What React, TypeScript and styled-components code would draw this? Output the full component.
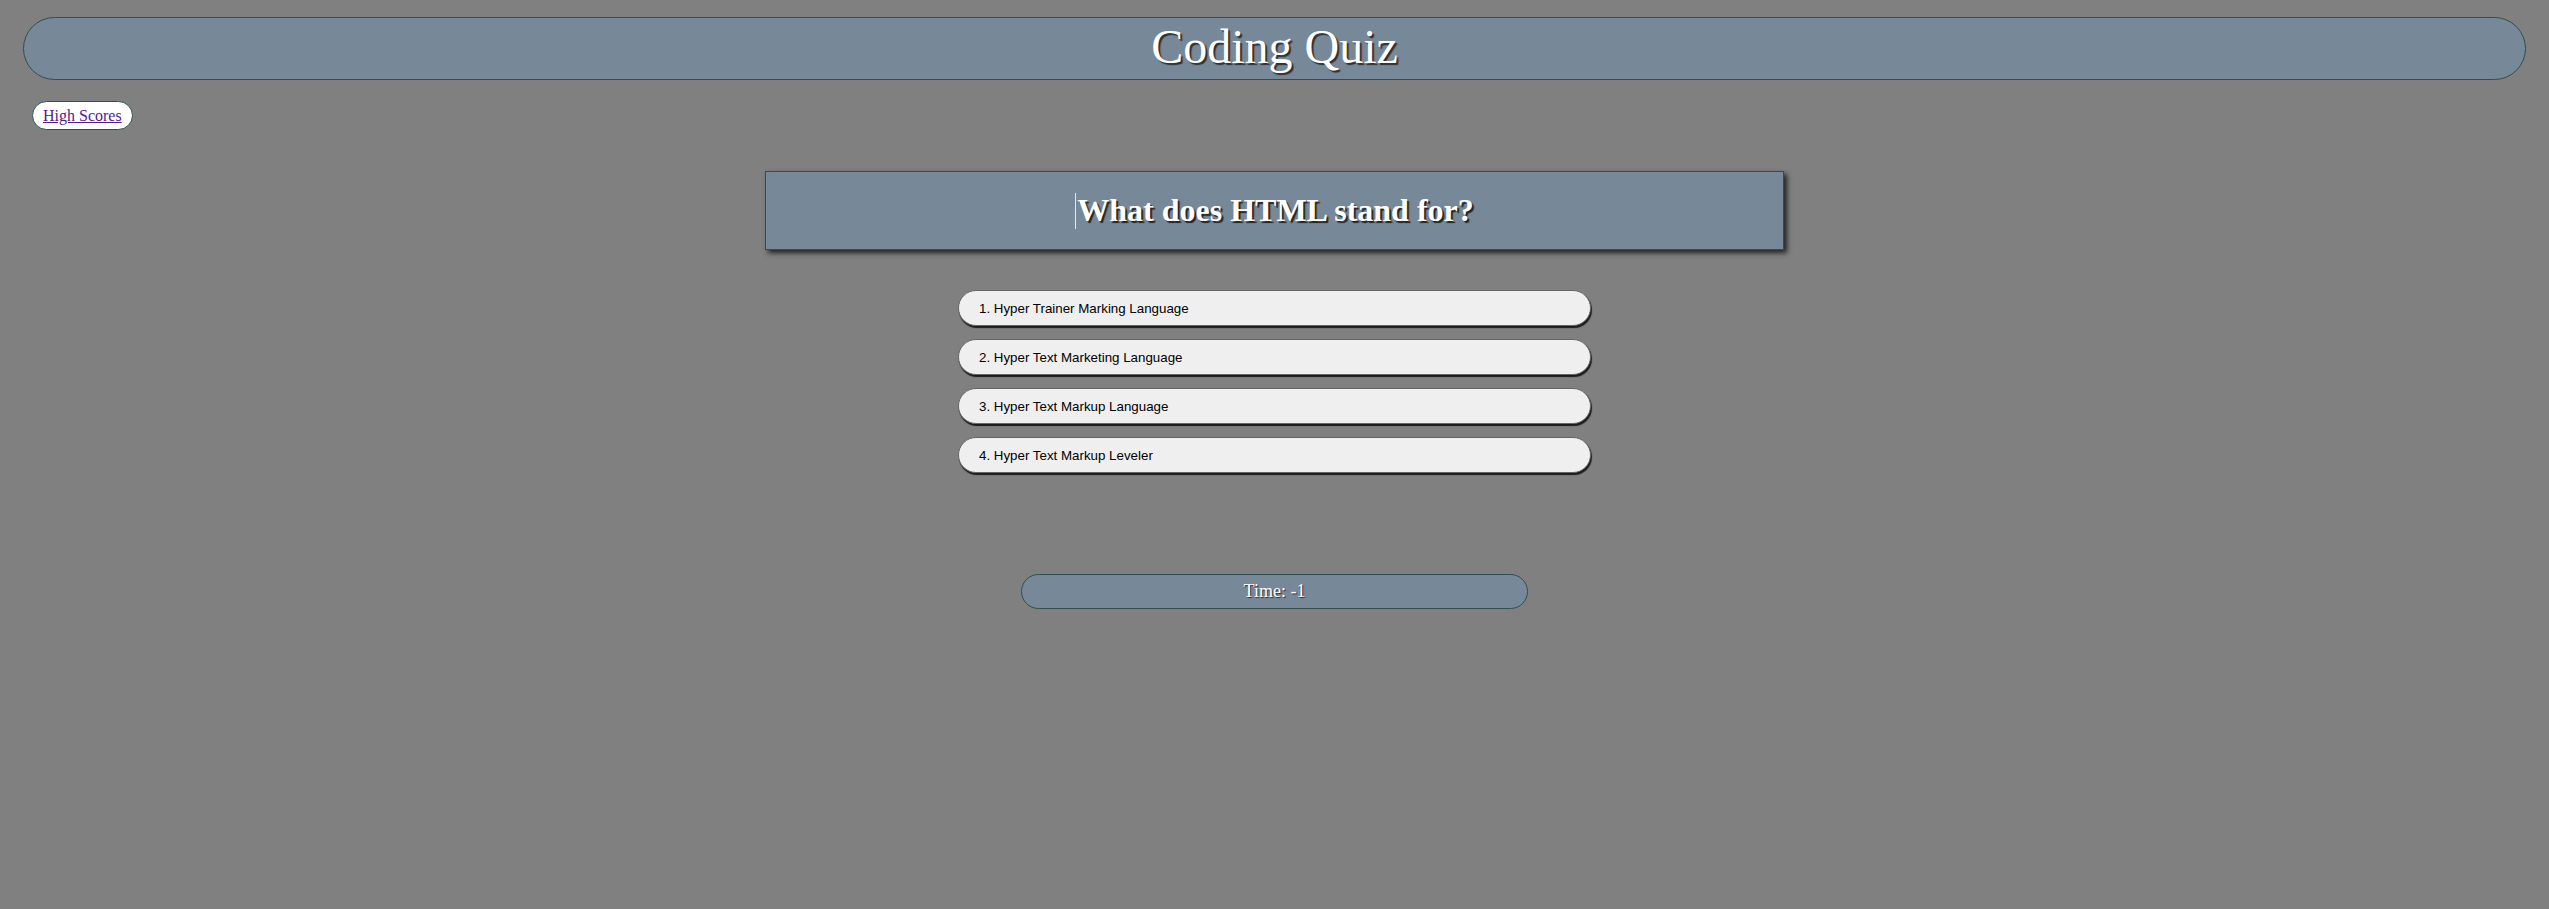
import React from "react";
import styled, { createGlobalStyle } from "styled-components";

const Global = createGlobalStyle`
  html, body { background: #808080; }
  body { margin: 8px; font-family: "Liberation Serif", "Times New Roman", serif; }
`;

const Header = styled.header`
  margin: 9px 15px 0;
  height: 63px;
  box-sizing: border-box;
  background: #778899;
  border: 1px solid #2f4f4f;
  border-radius: 32px;
  display: flex;
  align-items: center;
  justify-content: center;
`;

const Title = styled.h1`
  margin: 0;
  font-size: 48px;
  font-weight: normal;
  color: #fff;
  text-shadow: 2px 2px 1px #2f2f2f;
  line-height: 1;
  padding-bottom: 3px;
`;

const NavRow = styled.div`
  display: flex;
  padding: 21px 0 0 24px;
`;

const ScoresPill = styled.div`
  background: #fff;
  border: 1px solid #2f4f4f;
  border-radius: 15px;
  height: 29px;
  box-sizing: border-box;
  padding: 0 10px;
  display: flex;
  align-items: center;
`;

const ScoresLink = styled.a`
  font-size: 16px;
  color: #551a8b;
  text-decoration: underline;
`;

const Main = styled.main`
  display: flex;
  flex-direction: column;
  align-items: center;
  padding-top: 41px;
`;

const QuestionBox = styled.div`
  width: 1019px;
  height: 79px;
  box-sizing: border-box;
  background: #778899;
  border: 1px solid #2f4f4f;
  box-shadow: 3px 3px 5px #222;
  display: flex;
  align-items: center;
  justify-content: center;
`;

const QuestionText = styled.h2`
  margin: 0;
  font-size: 32px;
  font-weight: bold;
  color: #fff;
  text-shadow: 2px 2px 1px #222;
  display: flex;
  align-items: center;
`;

const Caret = styled.span`
  display: inline-block;
  width: 1px;
  height: 36px;
  background: rgba(255, 255, 255, 0.8);
  margin-right: 1px;
`;

const AnswerList = styled.div`
  display: flex;
  flex-direction: column;
  gap: 13px;
  margin-top: 40px;
  width: 633px;
`;

const AnswerButton = styled.button`
  height: 36px;
  box-sizing: border-box;
  border: 1px solid #666;
  border-radius: 18px;
  background: #efefef;
  box-shadow: 1px 2px 1px #1a1a1a;
  text-align: left;
  padding: 0 20px;
  font-family: "Liberation Sans", Arial, sans-serif;
  font-size: 13.33px;
  color: #000;
`;

const Timer = styled.div`
  margin-top: 101px;
  width: 507px;
  height: 35px;
  box-sizing: border-box;
  background: #778899;
  border: 1px solid #2f4f4f;
  border-radius: 18px;
  display: flex;
  align-items: center;
  justify-content: center;
  font-size: 18px;
  color: #fff;
  text-shadow: 1px 1px 1px #2f2f2f;
`;

const answers = [
  "1. Hyper Trainer Marking Language",
  "2. Hyper Text Marketing Language",
  "3. Hyper Text Markup Language",
  "4. Hyper Text Markup Leveler",
];

export default function App() {
  return (
    <>
      <Global />
      <Header>
        <Title>Coding Quiz</Title>
      </Header>
      <NavRow>
        <ScoresPill>
          <ScoresLink href="#">High Scores</ScoresLink>
        </ScoresPill>
      </NavRow>
      <Main>
        <QuestionBox>
          <QuestionText>
            <Caret />
            What does HTML stand for?
          </QuestionText>
        </QuestionBox>
        <AnswerList>
          {answers.map((a) => (
            <AnswerButton key={a}>{a}</AnswerButton>
          ))}
        </AnswerList>
        <Timer>Time: -1</Timer>
      </Main>
    </>
  );
}
